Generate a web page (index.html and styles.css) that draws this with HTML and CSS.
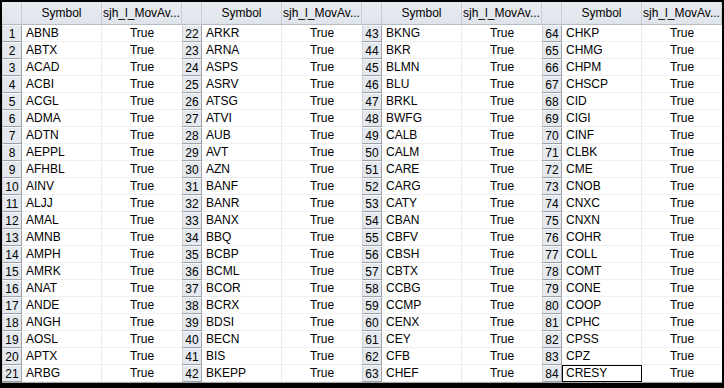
FILE: index.html
```html
<!DOCTYPE html>
<html>
<head>
<meta charset="utf-8">
<link rel="stylesheet" href="styles.css">
</head>
<body>
<div class="frame">
  <div class="panels">
    <div class="panel">
      <div class="h corner"></div><div class="h">Symbol</div><div class="h">sjh_l_MovAv...</div>
      <div class="n">1</div><div class="s">ABNB</div><div class="v">True</div>
      <div class="n">2</div><div class="s">ABTX</div><div class="v">True</div>
      <div class="n">3</div><div class="s">ACAD</div><div class="v">True</div>
      <div class="n">4</div><div class="s">ACBI</div><div class="v">True</div>
      <div class="n">5</div><div class="s">ACGL</div><div class="v">True</div>
      <div class="n">6</div><div class="s">ADMA</div><div class="v">True</div>
      <div class="n">7</div><div class="s">ADTN</div><div class="v">True</div>
      <div class="n">8</div><div class="s">AEPPL</div><div class="v">True</div>
      <div class="n">9</div><div class="s">AFHBL</div><div class="v">True</div>
      <div class="n">10</div><div class="s">AINV</div><div class="v">True</div>
      <div class="n">11</div><div class="s">ALJJ</div><div class="v">True</div>
      <div class="n">12</div><div class="s">AMAL</div><div class="v">True</div>
      <div class="n">13</div><div class="s">AMNB</div><div class="v">True</div>
      <div class="n">14</div><div class="s">AMPH</div><div class="v">True</div>
      <div class="n">15</div><div class="s">AMRK</div><div class="v">True</div>
      <div class="n">16</div><div class="s">ANAT</div><div class="v">True</div>
      <div class="n">17</div><div class="s">ANDE</div><div class="v">True</div>
      <div class="n">18</div><div class="s">ANGH</div><div class="v">True</div>
      <div class="n">19</div><div class="s">AOSL</div><div class="v">True</div>
      <div class="n">20</div><div class="s">APTX</div><div class="v">True</div>
      <div class="n">21</div><div class="s">ARBG</div><div class="v">True</div>
    </div>
    <div class="panel">
      <div class="h corner"></div><div class="h">Symbol</div><div class="h">sjh_l_MovAv...</div>
      <div class="n">22</div><div class="s">ARKR</div><div class="v">True</div>
      <div class="n">23</div><div class="s">ARNA</div><div class="v">True</div>
      <div class="n">24</div><div class="s">ASPS</div><div class="v">True</div>
      <div class="n">25</div><div class="s">ASRV</div><div class="v">True</div>
      <div class="n">26</div><div class="s">ATSG</div><div class="v">True</div>
      <div class="n">27</div><div class="s">ATVI</div><div class="v">True</div>
      <div class="n">28</div><div class="s">AUB</div><div class="v">True</div>
      <div class="n">29</div><div class="s">AVT</div><div class="v">True</div>
      <div class="n">30</div><div class="s">AZN</div><div class="v">True</div>
      <div class="n">31</div><div class="s">BANF</div><div class="v">True</div>
      <div class="n">32</div><div class="s">BANR</div><div class="v">True</div>
      <div class="n">33</div><div class="s">BANX</div><div class="v">True</div>
      <div class="n">34</div><div class="s">BBQ</div><div class="v">True</div>
      <div class="n">35</div><div class="s">BCBP</div><div class="v">True</div>
      <div class="n">36</div><div class="s">BCML</div><div class="v">True</div>
      <div class="n">37</div><div class="s">BCOR</div><div class="v">True</div>
      <div class="n">38</div><div class="s">BCRX</div><div class="v">True</div>
      <div class="n">39</div><div class="s">BDSI</div><div class="v">True</div>
      <div class="n">40</div><div class="s">BECN</div><div class="v">True</div>
      <div class="n">41</div><div class="s">BIS</div><div class="v">True</div>
      <div class="n">42</div><div class="s">BKEPP</div><div class="v">True</div>
    </div>
    <div class="panel">
      <div class="h corner"></div><div class="h">Symbol</div><div class="h">sjh_l_MovAv...</div>
      <div class="n">43</div><div class="s">BKNG</div><div class="v">True</div>
      <div class="n">44</div><div class="s">BKR</div><div class="v">True</div>
      <div class="n">45</div><div class="s">BLMN</div><div class="v">True</div>
      <div class="n">46</div><div class="s">BLU</div><div class="v">True</div>
      <div class="n">47</div><div class="s">BRKL</div><div class="v">True</div>
      <div class="n">48</div><div class="s">BWFG</div><div class="v">True</div>
      <div class="n">49</div><div class="s">CALB</div><div class="v">True</div>
      <div class="n">50</div><div class="s">CALM</div><div class="v">True</div>
      <div class="n">51</div><div class="s">CARE</div><div class="v">True</div>
      <div class="n">52</div><div class="s">CARG</div><div class="v">True</div>
      <div class="n">53</div><div class="s">CATY</div><div class="v">True</div>
      <div class="n">54</div><div class="s">CBAN</div><div class="v">True</div>
      <div class="n">55</div><div class="s">CBFV</div><div class="v">True</div>
      <div class="n">56</div><div class="s">CBSH</div><div class="v">True</div>
      <div class="n">57</div><div class="s">CBTX</div><div class="v">True</div>
      <div class="n">58</div><div class="s">CCBG</div><div class="v">True</div>
      <div class="n">59</div><div class="s">CCMP</div><div class="v">True</div>
      <div class="n">60</div><div class="s">CENX</div><div class="v">True</div>
      <div class="n">61</div><div class="s">CEY</div><div class="v">True</div>
      <div class="n">62</div><div class="s">CFB</div><div class="v">True</div>
      <div class="n">63</div><div class="s">CHEF</div><div class="v">True</div>
    </div>
    <div class="panel">
      <div class="h corner"></div><div class="h">Symbol</div><div class="h">sjh_l_MovAv...</div>
      <div class="n">64</div><div class="s">CHKP</div><div class="v">True</div>
      <div class="n">65</div><div class="s">CHMG</div><div class="v">True</div>
      <div class="n">66</div><div class="s">CHPM</div><div class="v">True</div>
      <div class="n">67</div><div class="s">CHSCP</div><div class="v">True</div>
      <div class="n">68</div><div class="s">CID</div><div class="v">True</div>
      <div class="n">69</div><div class="s">CIGI</div><div class="v">True</div>
      <div class="n">70</div><div class="s">CINF</div><div class="v">True</div>
      <div class="n">71</div><div class="s">CLBK</div><div class="v">True</div>
      <div class="n">72</div><div class="s">CME</div><div class="v">True</div>
      <div class="n">73</div><div class="s">CNOB</div><div class="v">True</div>
      <div class="n">74</div><div class="s">CNXC</div><div class="v">True</div>
      <div class="n">75</div><div class="s">CNXN</div><div class="v">True</div>
      <div class="n">76</div><div class="s">COHR</div><div class="v">True</div>
      <div class="n">77</div><div class="s">COLL</div><div class="v">True</div>
      <div class="n">78</div><div class="s">COMT</div><div class="v">True</div>
      <div class="n">79</div><div class="s">CONE</div><div class="v">True</div>
      <div class="n">80</div><div class="s">COOP</div><div class="v">True</div>
      <div class="n">81</div><div class="s">CPHC</div><div class="v">True</div>
      <div class="n">82</div><div class="s">CPSS</div><div class="v">True</div>
      <div class="n">83</div><div class="s">CPZ</div><div class="v">True</div>
      <div class="n">84</div><div class="s focus">CRESY</div><div class="v">True</div>
    </div>
  </div>
  <div class="bottom"></div>
</div>
</body>
</html>
```

FILE: styles.css
```css
* { box-sizing: border-box; }
html, body { margin: 0; padding: 0; background: #fff; }
body { width: 724px; height: 388px; overflow: hidden; }
.frame {
  width: 724px;
  height: 388px;
  border-left: 2px solid #000;
  border-right: 2px solid #000;
  border-top: 2px solid #000;
  background: #fff;
  display: flex;
  flex-direction: column;
}
.panels { display: flex; }
.panel {
  display: grid;
  grid-template-columns: 20px 80px 80px;
  grid-template-rows: 23px repeat(21, 17px);
  width: 180px;
  font-family: "Liberation Sans", Arial, sans-serif;
  font-size: 12px;
  color: #000;
}
.h {
  background: linear-gradient(#e8ecf1, #dfe4eb);
  border-right: 1px solid #c9ced6;
  border-bottom: 1px solid #b7bcc4;
  text-align: center;
  line-height: 22px;
  white-space: nowrap;
  overflow: hidden;
}
.n {
  background: #e4e9f0;
  border-left: 1px solid #cfd3d8;
  border-top: 1px solid #f6f7f9;
  border-right: 1px solid #9ea2a8;
  border-bottom: 1px solid #9ea2a8;
  text-align: center;
  line-height: 16px;
}
.s {
  border-bottom: 1px solid #f0f0f0;
  border-right: 1px solid #eaeaea;
  padding-left: 4px;
  line-height: 17px;
  white-space: nowrap;
}
.v {
  border-bottom: 1px solid #f0f0f0;
  text-align: center;
  line-height: 17px;
}
.focus { border: 1px solid #000; line-height: 15px; padding-left: 3px; }
.bottom {
  flex: 1;
  border-top: 1px solid #a8a8a8;
  background: #000;
}
```
